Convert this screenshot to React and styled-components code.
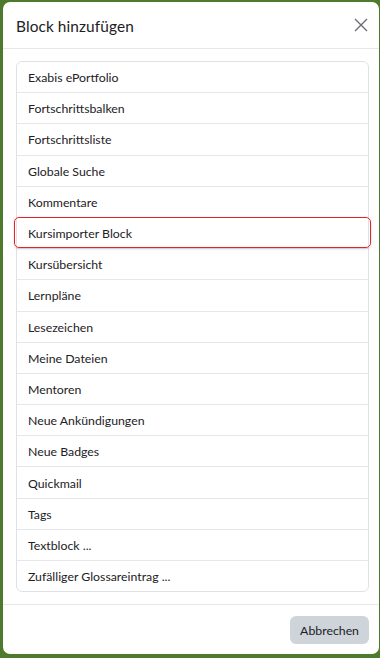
import styled, { createGlobalStyle } from "styled-components";

const GlobalStyle = createGlobalStyle`
    html, body {
        margin: 0;
        padding: 0;
        background: #4d7a2c;
    }
    body {
        font-family: Lato, "Noto Sans", sans-serif;
        color: #1d2125;
    }
`;

const Backdrop = styled.div`
    width: 380px;
    height: 658px;
    padding: 2px 1px 4px 3px;
    box-sizing: border-box;
    display: flex;
`;

const Modal = styled.div`
    flex: 1;
    background: #fff;
    border-radius: 7px;
    display: flex;
    flex-direction: column;
    overflow: hidden;
`;

const Header = styled.div`
    height: 47px;
    box-sizing: border-box;
    display: flex;
    align-items: center;
    justify-content: space-between;
    padding: 0 7px 0 13px;
    border-bottom: 1px solid #e5e7ea;
`;

const Title = styled.h5`
    margin: 0;
    padding-top: 2px;
    font-weight: normal;
    font-size: 15.4px;
    letter-spacing: 0.1px;
`;

const CloseButton = styled.button`
    border: none;
    background: none;
    padding: 4px;
    display: flex;
    cursor: pointer;
`;

const Body = styled.div`
    flex: 1;
    padding: 12px 10px 10px 13px;
`;

const List = styled.div`
    border: 1px solid #dee2e6;
    border-radius: 6px;
    display: flex;
    flex-direction: column;
`;

const Item = styled.div`
    height: 31.2px;
    box-sizing: border-box;
    display: flex;
    align-items: center;
    padding: 1px 11px 0;
    font-size: 12.3px;
    border-top: 1px solid ${({ first }) => (first ? "transparent" : "#e5e7ea")};
    margin-top: ${({ first }) => (first ? "-1px" : "0")};
    position: relative;
    ${({ active }) =>
        active &&
        `
        z-index: 1;
        margin: 0 -3px 0 -3px;
        padding: 1px 13px 0;
        height: 31.2px;
        border: 1.6px solid #e4222a;
        border-radius: 5px;
        box-shadow: 0 1px 3px rgba(0,0,0,0.15);
    `}
`;

const Footer = styled.div`
    height: 50px;
    box-sizing: border-box;
    border-top: 1px solid #e5e7ea;
    display: flex;
    justify-content: flex-end;
    align-items: center;
    padding: 0 10px;
`;

const Button = styled.button`
    background: #ced4da;
    border: none;
    border-radius: 6px;
    height: 28px;
    padding: 1px 10px 0;
    font-family: inherit;
    font-size: 12.3px;
    color: #1d2125;
`;

const blocks = [
    "Exabis ePortfolio",
    "Fortschrittsbalken",
    "Fortschrittsliste",
    "Globale Suche",
    "Kommentare",
    "Kursimporter Block",
    "Kursübersicht",
    "Lernpläne",
    "Lesezeichen",
    "Meine Dateien",
    "Mentoren",
    "Neue Ankündigungen",
    "Neue Badges",
    "Quickmail",
    "Tags",
    "Textblock ...",
    "Zufälliger Glossareintrag ...",
];

export default function App() {
    return (
        <>
            <GlobalStyle />
            <Backdrop>
                <Modal>
                    <Header>
                        <Title>Block hinzufügen</Title>
                        <CloseButton>
                            <svg width="14" height="14" viewBox="0 0 14 14">
                                <path d="M1 1L13 13M13 1L1 13" stroke="#6a6e72" strokeWidth="1.4" />
                            </svg>
                        </CloseButton>
                    </Header>
                    <Body>
                        <List>
                            {blocks.map((b, i) => (
                                <Item key={b} first={i === 0} active={b === "Kursimporter Block"}>
                                    {b}
                                </Item>
                            ))}
                        </List>
                    </Body>
                    <Footer>
                        <Button>Abbrechen</Button>
                    </Footer>
                </Modal>
            </Backdrop>
        </>
    );
}
